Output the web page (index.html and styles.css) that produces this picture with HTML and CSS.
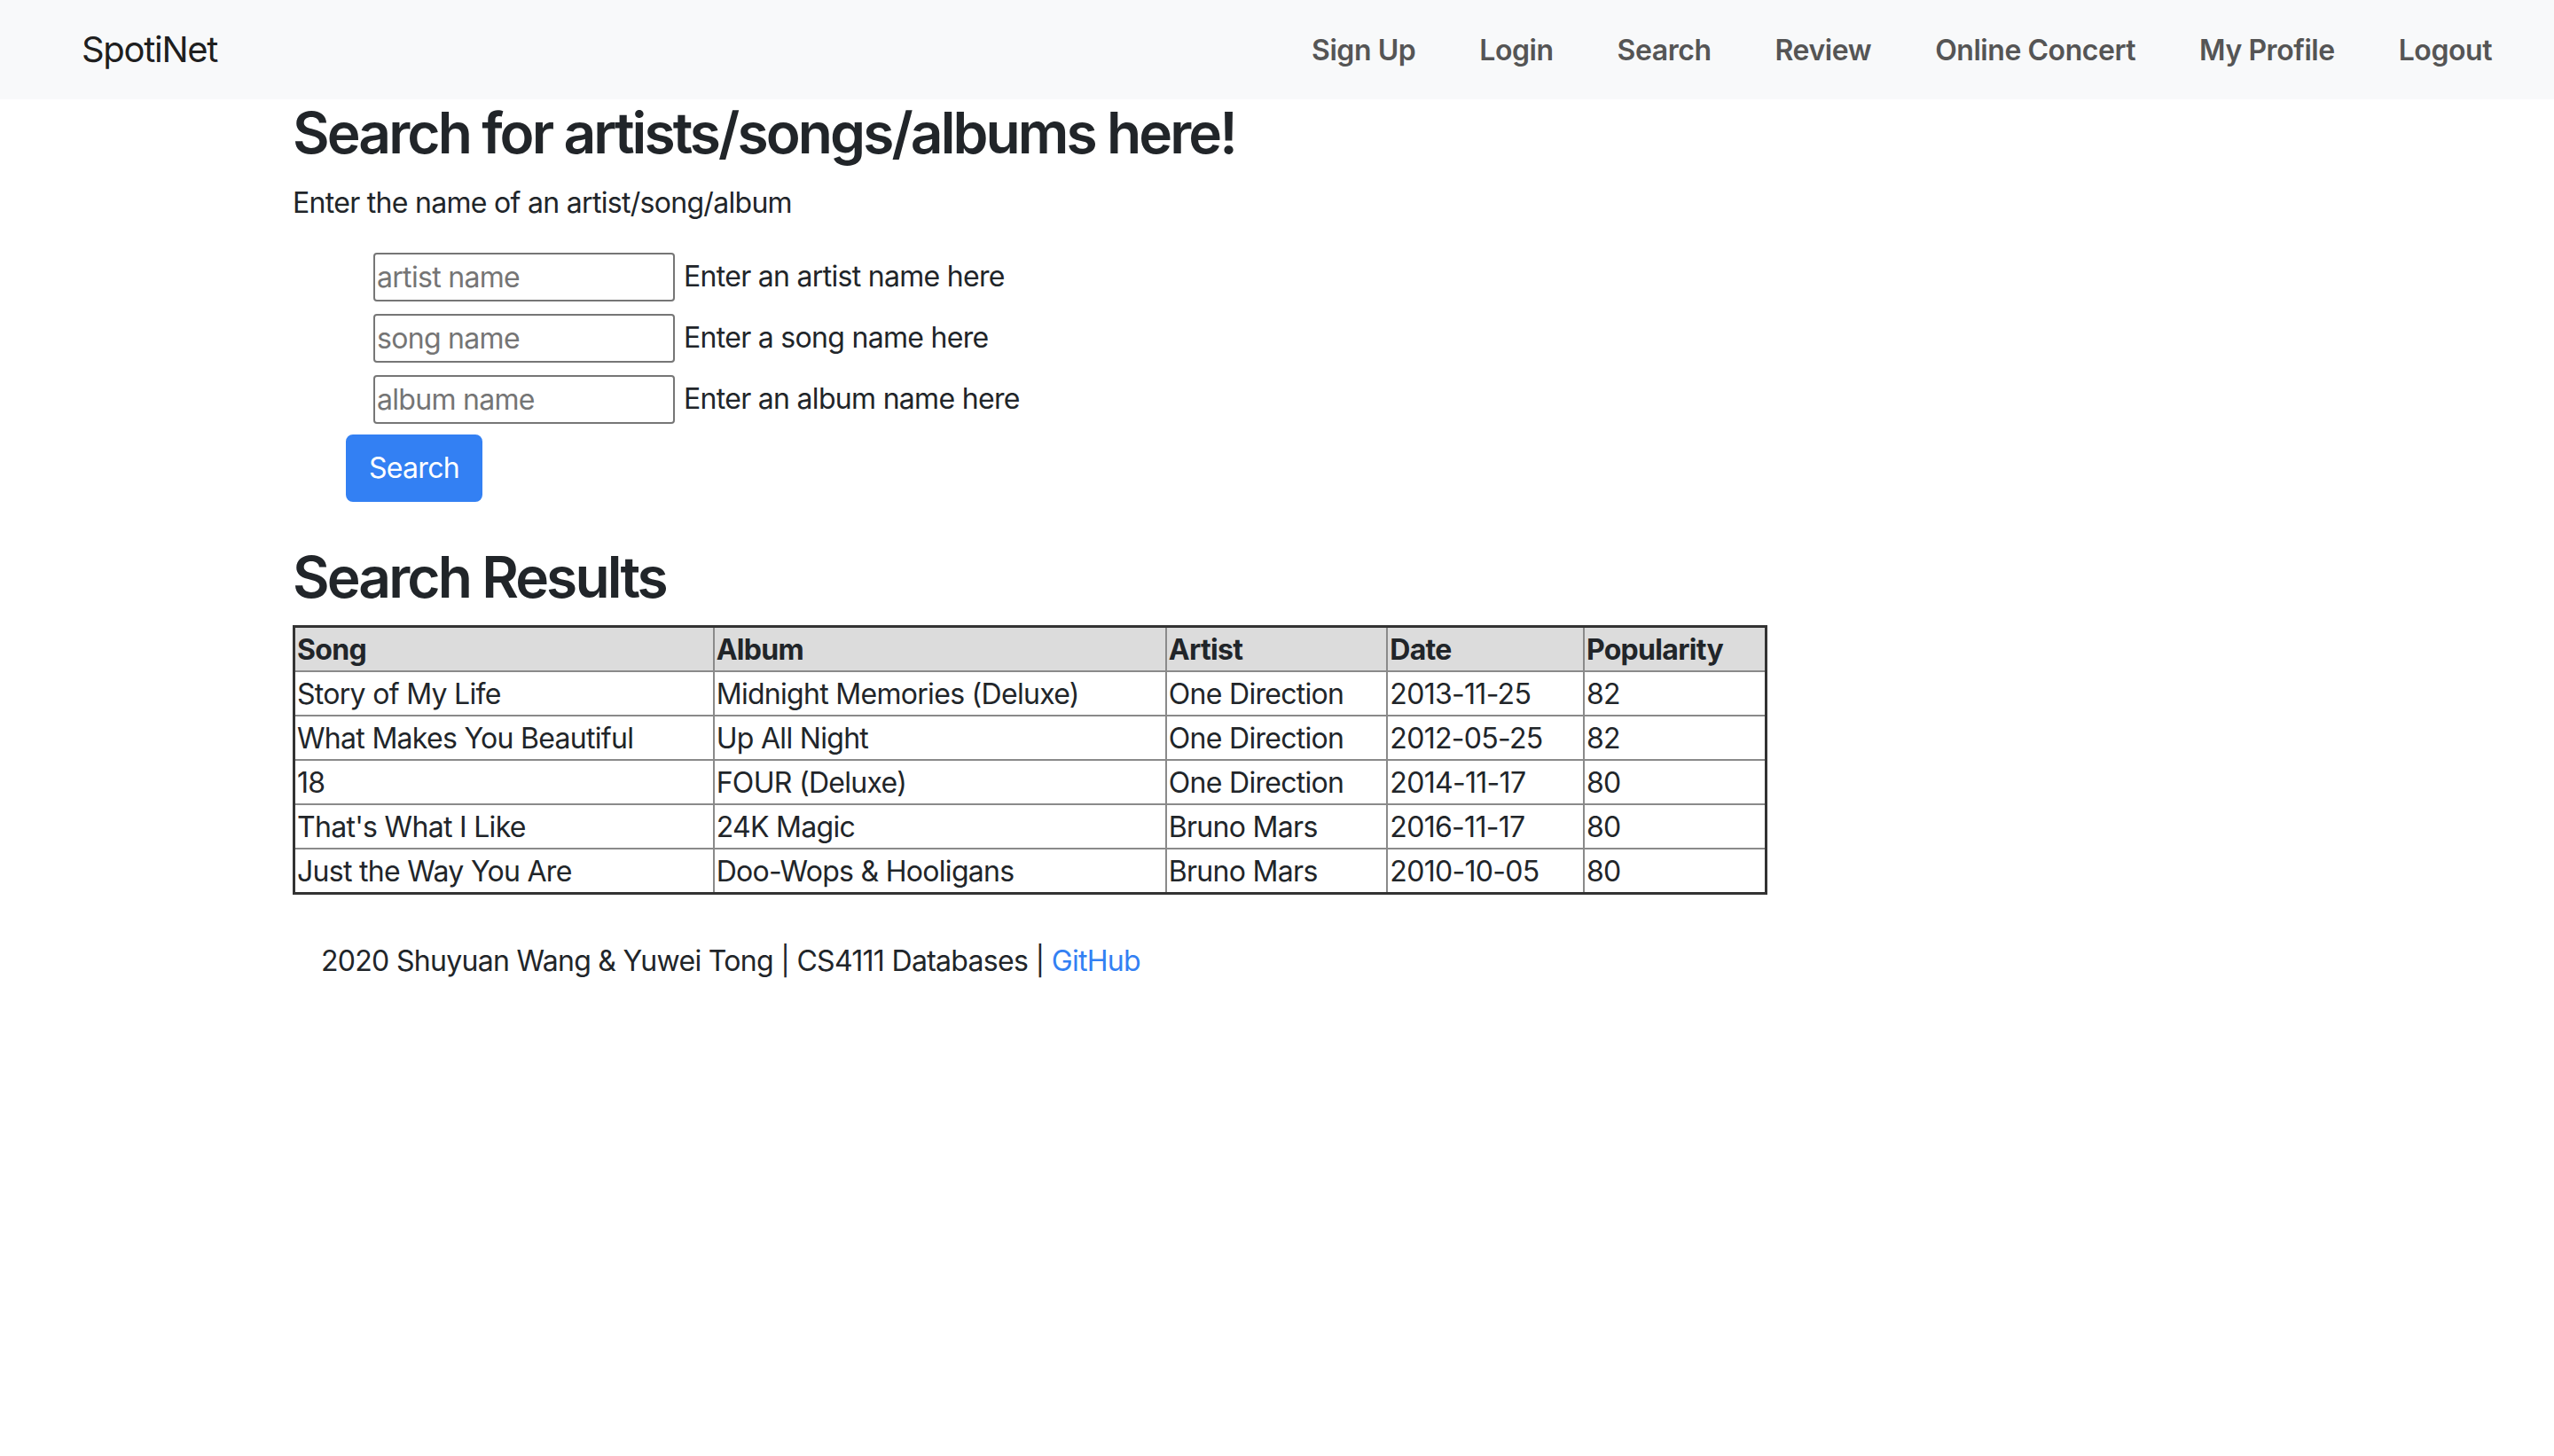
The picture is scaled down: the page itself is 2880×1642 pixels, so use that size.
FILE: index.html
```html
<!DOCTYPE html>
<html lang="en">
<head>
<meta charset="utf-8">
<title>SpotiNet - Search</title>
<link rel="stylesheet" href="styles.css">
</head>
<body>
<nav class="navbar">
  <a class="brand" href="#">SpotiNet</a>
  <ul class="nav-links">
    <li><a class="nav-link" href="#">Sign Up</a></li>
    <li><a class="nav-link" href="#">Login</a></li>
    <li><a class="nav-link" href="#">Search</a></li>
    <li><a class="nav-link" href="#">Review</a></li>
    <li><a class="nav-link" href="#">Online Concert</a></li>
    <li><a class="nav-link" href="#">My Profile</a></li>
    <li><a class="nav-link" href="#">Logout</a></li>
  </ul>
</nav>
<main class="container">
  <h1 class="page-title">Search for artists/songs/albums here!</h1>
  <p class="lead-text">Enter the name of an artist/song/album</p>
  <form class="search-form">
    <div class="field-row"><input class="field" type="text" placeholder="artist name"><span class="field-label">Enter an artist name here</span></div>
    <div class="field-row"><input class="field" type="text" placeholder="song name"><span class="field-label">Enter a song name here</span></div>
    <div class="field-row"><input class="field" type="text" placeholder="album name"><span class="field-label">Enter an album name here</span></div>
    <button class="btn-primary" type="button">Search</button>
  </form>
  <h2 class="page-title">Search Results</h2>
  <table class="results">
    <thead>
      <tr><th class="c-song">Song</th><th class="c-album">Album</th><th class="c-artist">Artist</th><th class="c-date">Date</th><th class="c-pop">Popularity</th></tr>
    </thead>
    <tbody>
      <tr><td>Story of My Life</td><td>Midnight Memories (Deluxe)</td><td>One Direction</td><td>2013-11-25</td><td>82</td></tr>
      <tr><td>What Makes You Beautiful</td><td>Up All Night</td><td>One Direction</td><td>2012-05-25</td><td>82</td></tr>
      <tr><td>18</td><td>FOUR (Deluxe)</td><td>One Direction</td><td>2014-11-17</td><td>80</td></tr>
      <tr><td>That's What I Like</td><td>24K Magic</td><td>Bruno Mars</td><td>2016-11-17</td><td>80</td></tr>
      <tr><td>Just the Way You Are</td><td>Doo-Wops &amp; Hooligans</td><td>Bruno Mars</td><td>2010-10-05</td><td>80</td></tr>
    </tbody>
  </table>
  <footer class="footer">2020 Shuyuan Wang &amp; Yuwei Tong | CS4111 Databases | <a class="footer-link" href="#">GitHub</a></footer>
</main>
</body>
</html>
```
FILE: styles.css
```css
* { box-sizing: border-box; }
html, body { margin: 0; padding: 0; }
body {
  font-family: Inter, "Noto Sans", sans-serif;
  font-size: 32px;
  line-height: 1.5;
  letter-spacing: -0.7px;
  color: #212529;
  background: #fff;
}
a { text-decoration: none; }

.navbar {
  height: 112px;
  background: #f8f9fa;
  display: flex;
  align-items: center;
  justify-content: space-between;
  padding: 0 34px 0 92px;
}
.brand {
  font-size: 40px;
  line-height: 1.5;
  letter-spacing: -1.3px;
  color: rgba(0,0,0,.9);
}
.nav-links {
  list-style: none;
  margin: 0;
  padding: 2px 0 0;
  display: flex;
}
.nav-link {
  display: block;
  padding: 0 36px;
  font-size: 32px;
  font-weight: 600;
  letter-spacing: -0.45px;
  color: #555;
}

.container {
  max-width: 2280px;
  margin: 0 auto;
  padding: 0 30px;
}
.page-title {
  font-size: 64px;
  font-weight: 600;
  line-height: 1.2;
  letter-spacing: -2.9px;
  margin: 0 0 16px;
}
h2.page-title { margin-bottom: 15px; }
.lead-text { margin: 0 0 32px; }

.search-form {
  display: flex;
  flex-direction: column;
  align-items: flex-start;
  gap: 14px;
  padding-left: 91px;
  margin-bottom: 47px;
}
.field-row {
  display: flex;
  align-items: center;
}
.field {
  width: 340px;
  height: 55px;
  border: 2px solid #767676;
  border-radius: 4px;
  padding: 2px 2px;
  font-family: inherit;
  font-size: 32px;
  letter-spacing: -0.7px;
  color: #212529;
  background: #fff;
}
.field::placeholder { color: #757575; }
.field-label { margin-left: 10px; }
.btn-primary {
  margin-left: -31px;
  margin-top: -2px;
  height: 76px;
  padding: 0 24px;
  border: 2px solid #3380f3;
  border-radius: 8px;
  background: #3380f3;
  color: #fff;
  font-family: inherit;
  font-size: 32px;
  letter-spacing: -0.7px;
  line-height: 1.5;
}

.results {
  width: 1663px;
  border-collapse: collapse;
  border: 3px solid #333;
}
.results th, .results td {
  border: 2px solid #8a8a8a;
  padding: 2px 2px 0;
  text-align: left;
  line-height: 46px;
  height: 48px;
  white-space: nowrap;
}
.results th { background: #dcdcdc; font-weight: 700; }
.c-song { width: 474px; }
.c-album { width: 511px; }
.c-artist { width: 250px; }
.c-date { width: 222px; }
.c-pop { width: 206px; }

.footer {
  padding: 51px 0 0 32px;
}
.footer-link { color: #3380f3; }
```
